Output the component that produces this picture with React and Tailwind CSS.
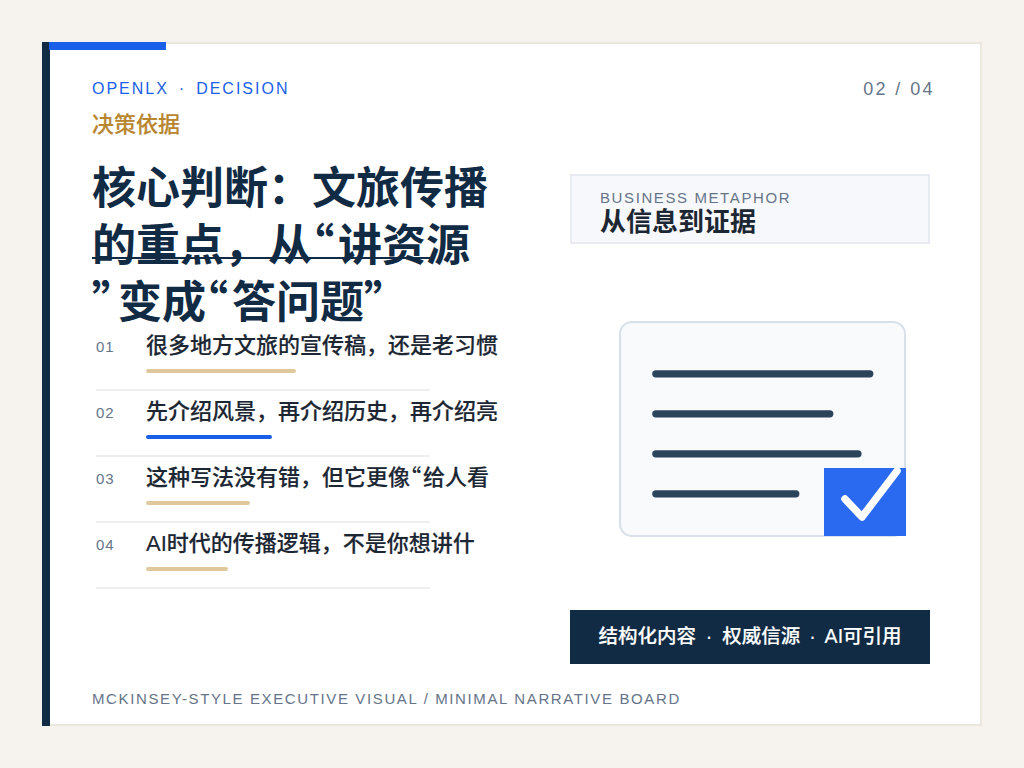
const rows = [
  { no: "01", text: "很多地方文旅的宣传稿，还是老习惯", bar: "w-[150px] bg-[#dfc89b]" },
  { no: "02", text: "先介绍风景，再介绍历史，再介绍亮", bar: "w-[126px] bg-[#1a5fe8]" },
  { no: "03", text: <>这种写法没有错，但它更像<Quote>“</Quote>给人看</>, bar: "w-[104px] bg-[#dfc89b]" },
  { no: "04", text: "AI时代的传播逻辑，不是你想讲什", bar: "w-[82px] bg-[#dfc89b]" },
];

function Quote({ children }) {
  return <span className="font-['Noto_Sans_CJK_SC',sans-serif] [font-feature-settings:'palt'] leading-[0] tracking-[0.09em]">{children}</span>;
}

function DocIllustration() {
  return (
    <svg width="290" height="218" viewBox="0 0 290 218" className="block">
      <rect x="3" y="3" width="285" height="214" rx="12" fill="#f9fafc" stroke="#d8e0ea" strokeWidth="2" />
      <g stroke="#2c435c" strokeWidth="7.2" strokeLinecap="round">
        <line x1="38.8" y1="54.8" x2="252.8" y2="54.8" />
        <line x1="38.8" y1="94.8" x2="212.8" y2="94.8" />
        <line x1="38.8" y1="134.8" x2="241" y2="134.8" />
        <line x1="38.8" y1="174.8" x2="178.8" y2="174.8" />
      </g>
      <rect x="207" y="149" width="82" height="68" fill="#2a6af0" />
      <path d="M228 180 L245 198 L280 152" fill="none" stroke="#fff" strokeWidth="7.5" strokeLinecap="round" strokeLinejoin="round" />
    </svg>
  );
}

export default function App() {
  return (
    <div className="w-[1024px] h-[768px] bg-[#f6f3ee] p-[42px] font-['Liberation_Sans','Noto_Sans_CJK_SC',sans-serif]">
      <div className="relative h-[684px] bg-white border-2 border-[#ebe7df] pl-[48px] pr-[45px] flex flex-col">
        <div className="absolute -left-[2px] -top-[2px] -bottom-[2px] w-[8px] bg-[#112b45]"></div>
        <div className="absolute left-[5px] -top-[2px] w-[117px] h-[8px] bg-[#1a5fe8]"></div>

        <div className="flex justify-between items-start pt-[34px]">
          <div className="text-[16px] leading-[22px] tracking-[2px] text-[#1a5fe8]">OPENLX <span className="px-[3.5px]">·</span> DECISION</div>
          <div className="text-[18px] leading-[22px] tracking-[2.4px] text-[#667489]">02 / 04</div>
        </div>
        <div className="mt-[12px] text-[22px] leading-[26px] font-medium [-webkit-text-stroke:0.15px] text-[#b8862f]">决策依据</div>

        <div className="flex justify-between mt-[22px] mr-[5px]">
          <div className="w-[400px]">
            <div className="relative h-[165px]">
              <h1 className="w-[400px] text-[44px] leading-[57px] font-semibold text-[#112b45]">
                核心判断：文旅传播<br />
                的重点，从<Quote>“</Quote>讲资源<br />
                <Quote>”</Quote>变成<Quote>“</Quote>答问题<Quote>”</Quote>
              </h1>
              <div className="absolute left-0 top-[97px] w-[338px] h-[2px] bg-[#112b45]"></div>
            </div>
            <div className="ml-[4px] w-[334px]">
              {rows.map((r) => (
                <div key={r.no} className="flex h-[66px] border-b-2 border-[#eceef0]">
                  <div className="w-[50px] shrink-0 pt-[12px] text-[15px] leading-[20px] tracking-[0.8px] text-[#667489]">{r.no}</div>
                  <div className="w-[352px] shrink-0">
                    <div className="whitespace-nowrap pt-[6px] text-[22px] leading-[30px] font-medium [-webkit-text-stroke:0.15px] text-[#1c2733]">{r.text}</div>
                    <div className={`mt-[8px] h-[4px] rounded-full ${r.bar}`}></div>
                  </div>
                </div>
              ))}
            </div>
          </div>

          <div className="w-[360px] mt-[14px]">
            <div className="h-[70px] bg-[#f7f8fb] border-2 border-[#e8ebf1] pl-[28px] pt-[13px]">
              <div className="text-[15px] leading-[18px] tracking-[1.6px] text-[#667489]">BUSINESS METAPHOR</div>
              <div className="mt-[1px] text-[26px] leading-[28px] font-semibold text-[#1c2733]">从信息到证据</div>
            </div>
            <div className="mt-[75px] ml-[47px]">
              <DocIllustration />
            </div>
            <div className="mt-[73px] h-[54px] bg-[#112b45] flex items-center justify-center text-[19.5px] font-medium [-webkit-text-stroke:0.15px] text-white">
              <span>结构化内容 <span className="px-[4.5px]">·</span> 权威信源 <span className="px-[3.5px]">·</span> AI可引用</span>
            </div>
          </div>
        </div>

        <div className="mt-[24px] text-[15px] leading-[22px] tracking-[1.62px] text-[#667489]">
          MCKINSEY-STYLE EXECUTIVE VISUAL / MINIMAL NARRATIVE BOARD
        </div>
      </div>
    </div>
  );
}
